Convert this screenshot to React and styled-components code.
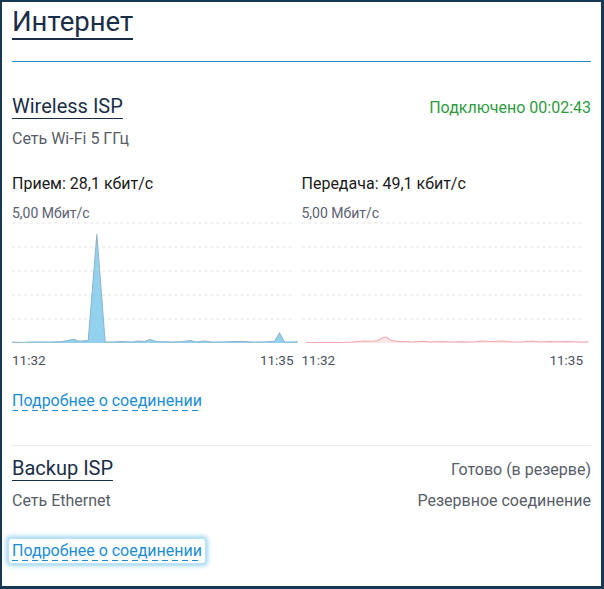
import styled, { createGlobalStyle } from 'styled-components';

const GlobalStyle = createGlobalStyle`
   html, body {
      margin: 0;
      padding: 0;
      background: #173850;
   }
   body {
      font-family: Roboto, 'Noto Sans', sans-serif;
   }
`;

const Panel = styled.div`
   background: #ffffff;
   margin: 2px 3px 0 2px;
   height: 584px;
   padding: 4px 10px 0 10px;
   box-sizing: border-box;
   overflow: hidden;
`;

const PageHeader = styled.div`
   border-bottom: 1px solid #1d8fd1;
   padding-bottom: 21px;
   & h1 {
      display: inline-block;
      margin: 0;
      font-size: 27.5px;
      font-weight: 400;
      line-height: 32px;
      color: #1b2e47;
      border-bottom: 2px solid #1b2e47;
   }
`;

const Section = styled.section`
   padding-top: ${({ $top }) => $top}px;
   padding-bottom: ${({ $bottom }) => $bottom || 0}px;
   border-bottom: ${({ $divider }) => ($divider ? '1px solid #ebebeb' : 'none')};
`;

const Row = styled.div`
   display: flex;
   justify-content: space-between;
   align-items: baseline;
   margin-top: ${({ $gap }) => $gap || 0}px;
`;

const SectionTitle = styled.h2`
   margin: 0;
   font-size: 20px;
   font-weight: 400;
   line-height: 24px;
   color: #1b2e47;
   border-bottom: 1px solid #1b2e47;
`;

const Status = styled.span`
   font-size: 16px;
   line-height: 20px;
   color: ${({ $ok }) => ($ok ? '#2e9b3f' : '#585d68')};
`;

const Note = styled.span`
   font-size: 16px;
   line-height: 20px;
   color: #585d68;
`;

const Charts = styled.div`
   display: grid;
   grid-template-columns: 1fr 1fr;
   gap: 8px;
   padding-right: 8px;
   margin-top: 25px;
`;

const ChartCol = styled.div`
   display: flex;
   flex-direction: column;
   min-width: 0;
`;

const Rate = styled.div`
   font-size: 16px;
   line-height: 20px;
   color: #1a1a1a;
`;

const Scale = styled.div`
   margin-top: 11px;
   font-size: 14px;
   line-height: 16px;
   color: #5a6070;
`;

const Plot = styled.svg`
   display: block;
   width: 100%;
   height: 122px;
   margin-top: 1px;
   overflow: visible;
`;

const Times = styled.div`
   display: flex;
   justify-content: space-between;
   margin-top: 8px;
   font-size: 13.5px;
   line-height: 16px;
   color: #4a5060;
`;

const More = styled.a`
   display: inline-block;
   margin-top: ${({ $top }) => $top}px;
   font-size: 16px;
   line-height: 20px;
   color: #1c8dd4;
   text-decoration: none;
   background-image: repeating-linear-gradient(
      to right,
      #1c8dd4 0 6px,
      transparent 6px 10px
   );
   background-size: 100% 1px;
   background-position: 0 19px;
   background-repeat: no-repeat;
   padding: ${({ $focus }) => ($focus ? '2px 3px' : '0')};
   margin-left: ${({ $focus }) => ($focus ? '-3px' : '0')};
   background-origin: content-box;
   border-radius: 2px;
   box-shadow: ${({ $focus }) =>
      $focus ? '0 0 0 1px #b9e1f7, 0 0 4px 3px rgba(70, 175, 232, 0.5)' : 'none'};
`;

const rx = [
   [0, 120], [10, 120.5], [20, 120], [30, 120], [40, 120], [50, 119.5], [58, 118],
   [62, 117.5], [66, 119], [70, 119], [74, 118.5], [76, 119], [84.7, 12], [93, 120],
   [100, 120], [110, 119.5], [120, 120], [126, 119], [132, 119.5], [138, 117.5],
   [144, 119.5], [160, 120], [170, 119.5], [178, 118.5], [184, 120], [192, 119],
   [200, 120], [210, 120], [220, 119.5], [230, 119.5], [240, 120], [250, 120],
   [258, 119.5], [262, 119.5], [267, 111], [272, 120], [280, 120], [285, 119.8],
];

const tx = [
   [4, 120.5], [20, 120.5], [40, 120.5], [50, 120], [56, 119.5], [62, 119], [70, 119.2],
   [76, 118.5], [80, 116], [84, 115], [89, 118.5], [96, 119.5], [104, 119.5], [110, 120],
   [120, 119.3], [130, 120], [140, 119.6], [150, 120], [160, 119.8], [170, 120], [180, 119],
   [190, 119.4], [200, 119], [210, 120], [220, 119.8], [230, 119], [238, 120], [246, 119.4],
   [256, 119.8], [264, 119.4], [272, 119.7], [282, 120], [286, 119.8],
];

const toPath = (pts) =>
   pts.map(([x, y], i) => `${i ? 'L' : 'M'}${x} ${y}`).join(' ');

const Chart = ({ data, fill, stroke }) => {
   const line = toPath(data);
   const area = `${line} L${data[data.length - 1][0]} 121 L${data[0][0]} 121 Z`;
   return (
      <Plot viewBox='0 0 281 122' preserveAspectRatio='none'>
         {[1, 25, 49, 73, 97].map((y) => (
            <line
               key={y}
               x1='0'
               x2='281'
               y1={y}
               y2={y}
               stroke='#e4e4e4'
               strokeDasharray='3 3'
               strokeWidth='1'
            />
         ))}
         <path d={area} fill={fill} />
         <path d={line} fill='none' stroke={stroke} strokeWidth='1' />
      </Plot>
   );
};

const App = () => {
   return (
      <>
         <GlobalStyle />
         <Panel>
            <PageHeader>
               <h1>Интернет</h1>
            </PageHeader>
            <Section $top={32} $bottom={34} $divider>
               <Row>
                  <SectionTitle>Wireless ISP</SectionTitle>
                  <Status $ok>Подключено 00:02:43</Status>
               </Row>
               <Row $gap={10}>
                  <Note>Сеть Wi-Fi 5 ГГц</Note>
               </Row>
               <Charts>
                  <ChartCol>
                     <Rate>Прием: 28,1 кбит/с</Rate>
                     <Scale>5,00 Мбит/с</Scale>
                     <Chart data={rx} fill='#93d2ee' stroke='#8fb3c8' />
                     <Times>
                        <span>11:32</span>
                        <span>11:35</span>
                     </Times>
                  </ChartCol>
                  <ChartCol>
                     <Rate>Передача: 49,1 кбит/с</Rate>
                     <Scale>5,00 Мбит/с</Scale>
                     <Chart data={tx} fill='#fbe6e8' stroke='#f3a9ae' />
                     <Times>
                        <span>11:32</span>
                        <span>11:35</span>
                     </Times>
                  </ChartCol>
               </Charts>
               <More href='#' $top={23}>
                  Подробнее о соединении
               </More>
            </Section>
            <Section $top={10}>
               <Row>
                  <SectionTitle>Backup ISP</SectionTitle>
                  <Status>Готово (в резерве)</Status>
               </Row>
               <Row $gap={10}>
                  <Note>Сеть Ethernet</Note>
                  <Note>Резервное соединение</Note>
               </Row>
               <More href='#' $top={28} $focus>
                  Подробнее о соединении
               </More>
            </Section>
         </Panel>
      </>
   );
};

export default App;
